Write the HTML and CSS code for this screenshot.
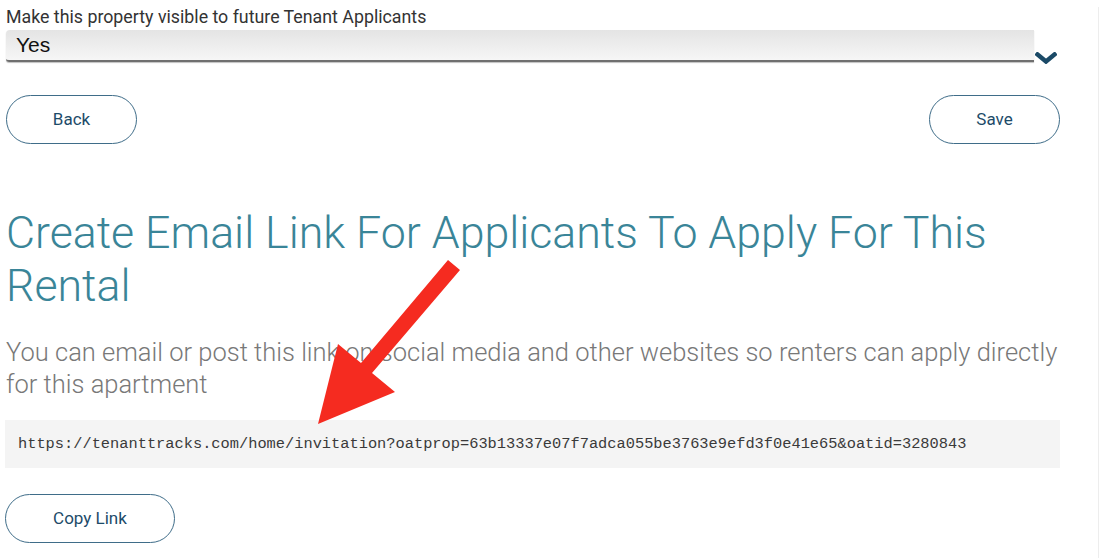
FILE: index.html
```html
<!DOCTYPE html>
<html lang="en">
<head>
  <meta charset="UTF-8">
  <meta name="viewport" content="width=device-width, initial-scale=1.0">
  <title>Property Settings - Tenant Tracks</title>
  <link rel="stylesheet" href="styles.css">
</head>
<body>
  <div class="page">
    <div class="container">
      <!-- Visibility selector -->
      <label class="field-label" for="visible">Make this property visible to future Tenant Applicants</label>
      <div class="select-row">
        <div class="select-box" id="visible">Yes</div>
        <svg class="chevron" width="22" height="12" viewBox="0 0 22 12">
          <polyline points="2.5,2.5 11,9.5 19.5,2.5" fill="none" stroke="#1b4a67" stroke-width="4.5" stroke-linejoin="miter" stroke-linecap="square"/>
        </svg>
      </div>

      <div class="actions">
        <button class="pill-button">Back</button>
        <button class="pill-button">Save</button>
      </div>

      <!-- Invitation link -->
      <h1 class="title">Create Email Link For Applicants To Apply For This Rental</h1>
      <p class="intro">You can email or post this link on social media and other websites so renters can apply directly for this apartment</p>

      <div class="link-box">https://tenanttracks.com/home/invitation?oatprop=63b13337e07f7adca055be3763e9efd3f0e41e65&amp;oatid=3280843</div>

      <button class="pill-button copy-button">Copy Link</button>
    </div>

    <!-- Annotation arrow -->
    <svg class="arrow" width="1102" height="558" viewBox="0 0 1102 558">
      <polygon points="448,253 460,263 372,366 395,385 318,417 338,337 361,356" fill="#f52b20"/>
    </svg>
  </div>
</body>
</html>
```

FILE: styles.css
```css
/* General */
body {
  margin: 0;
  font-family: Roboto, "Liberation Sans", sans-serif;
  background-color: #ffffff;
}

.page {
  position: relative;
  width: 1098px;
  min-height: 558px;
  border-right: 1px solid #ededed;
}

.container {
  width: 1055px;
  padding: 0 0 0 5px;
}

/* Selector */
.field-label {
  display: block;
  margin: 7px 0 0 1px;
  font-size: 17.8px;
  line-height: 20px;
  color: #333333;
}

.select-row {
  display: flex;
  align-items: flex-end;
  margin-top: 3px;
}

.select-box {
  width: 1018px;
  height: 30px;
  margin-left: 1px;
  padding-left: 10px;
  font-family: "Liberation Sans", Arial, sans-serif;
  font-size: 21px;
  line-height: 29px;
  color: #111111;
  background: linear-gradient(#e4e4e4, #f6f6f6);
  border-bottom: 2px solid #6f6f6f;
  border-radius: 4px 0 0 3px;
  box-shadow: 0 1px 1px rgba(0, 0, 0, 0.25);
}

.chevron {
  margin: 0 0 -2px 1px;
}

/* Buttons */
.actions {
  display: flex;
  justify-content: space-between;
  margin-top: 33px;
}

.pill-button {
  width: 131px;
  height: 49px;
  margin-left: 1px;
  padding-bottom: 3px;
  font-family: Roboto, "Liberation Sans", sans-serif;
  font-size: 17px;
  color: #1d4b69;
  background-color: #ffffff;
  border: 1.5px solid #3f6d89;
  border-radius: 25px;
  cursor: pointer;
}

/* Link section */
.title {
  margin: 63px 0 0 1px;
  font-size: 44.7px;
  font-weight: 300;
  line-height: 53px;
  color: #3a8598;
}

.intro {
  margin: 23px 0 0 1px;
  font-size: 25.5px;
  font-weight: 300;
  line-height: 32px;
  color: #787878;
}

.link-box {
  margin-top: 20px;
  padding: 0 13px;
  height: 48px;
  line-height: 49px;
  font-family: "Liberation Mono", "Courier New", monospace;
  font-size: 15.35px;
  color: #3a3a3a;
  background-color: #f4f4f4;
}

.copy-button {
  width: 170px;
  margin: 26px 0 0 0;
}

/* Annotation */
.arrow {
  position: absolute;
  left: 0;
  top: 0;
  pointer-events: none;
}
```
